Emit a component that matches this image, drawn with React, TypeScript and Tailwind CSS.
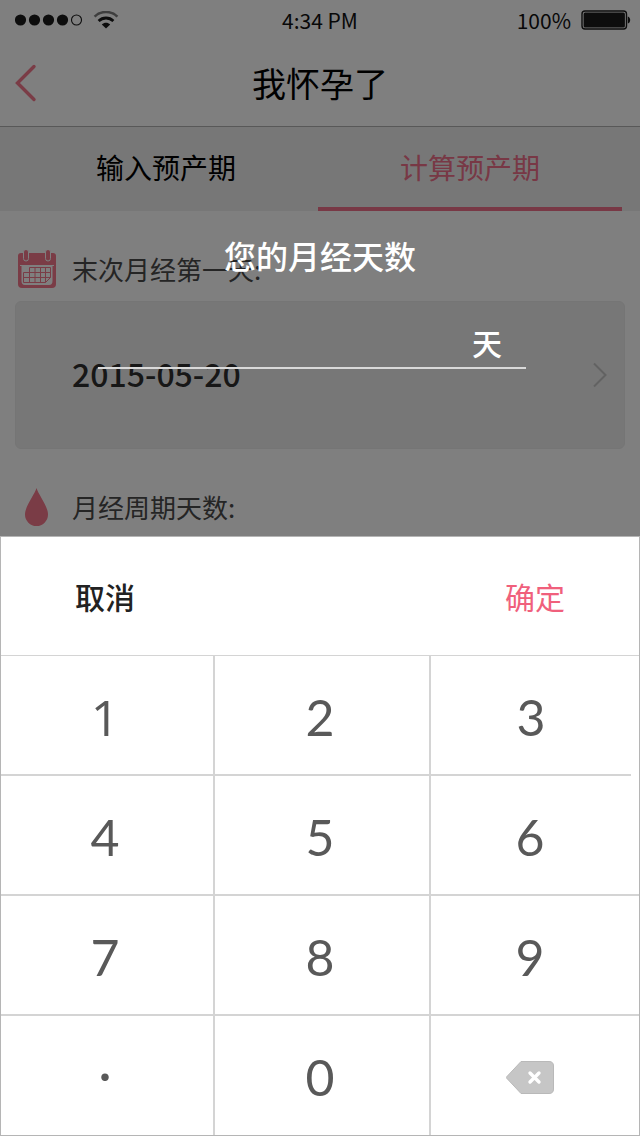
import { useState, type ReactNode } from 'react';

const DIGITS = ['1', '2', '3', '4', '5', '6', '7', '8', '9', '·', '0'];

function StatusBar() {
  return (
    <div className="grid h-10 grid-cols-3 items-center px-[15px] text-[21px] leading-10 text-[#111]">
      <div className="flex items-center gap-[10px]">
        <svg width="68" height="12" viewBox="0 0 68 12" aria-hidden="true">
          {[6, 20, 34, 48].map((x) => (
            <circle key={x} cx={x - 0.5} cy="6" r="5.6" fill="#1a1a1a" />
          ))}
          <circle cx="61.5" cy="6" r="5" fill="none" stroke="#1a1a1a" strokeWidth="1.1" />
        </svg>
        <svg width="26" height="18" viewBox="0 0 26 18" fill="none" aria-hidden="true">
          <path d="M1.6 5.6C8-.5 18-.5 24.4 5.6" stroke="#7c7c7c" strokeWidth="2.6" />
          <path d="M5.6 10C9.8 6 16.2 6 20.4 10" stroke="#1a1a1a" strokeWidth="2.8" />
          <path d="M8.8 13.4C11.2 11.3 14.8 11.3 17.2 13.4L13 17.6Z" fill="#1a1a1a" />
        </svg>
      </div>
      <span className="text-center">4:34 PM</span>
      <div className="-mr-[6px] flex items-center justify-end gap-[10px]">
        <span>100%</span>
        <svg width="50" height="20" viewBox="0 0 50 20" aria-hidden="true">
          <rect x="1" y="1" width="44.5" height="18" rx="3" fill="#fff" stroke="#1a1a1a" strokeWidth="1.4" />
          <rect x="2.6" y="2.6" width="41.3" height="14.8" rx="1.5" fill="#1a1a1a" />
          <path d="M46.8 6.5C50 7.5 50 12.5 46.8 13.5Z" fill="#1a1a1a" />
        </svg>
      </div>
    </div>
  );
}

function CalendarIcon() {
  return (
    <svg width="38" height="38" viewBox="0 0 38 38" aria-hidden="true">
      <path d="M3 3H35Q38 3 38 6V34Q38 38 34 38H4Q0 38 0 34V6Q0 3 3 3Z" fill="#f4788c" />
      <path d="M2 15H36V16H34.5V31Q34.5 35 31 35H7Q3.5 35 3.5 31V16H2Z" fill="#fff" />
      <rect x="5.5" y="-.5" width="5" height="11.5" rx="2.5" fill="#f4788c" stroke="#fff" />
      <rect x="27.5" y="-.5" width="5" height="11.5" rx="2.5" fill="#f4788c" stroke="#fff" />
      <path
        d="M11.5 17.5H32.5V27.5M5.5 22.5H32.5M5.5 27.5H32.5M5.5 32.5H27.5M5.5 22.5V32.5M11.5 17.5V32.5M17 17.5V32.5M22.5 17.5V32.5M27.5 17.5V32.5M27.5 32.5L32.5 27.5"
        fill="none"
        stroke="#f4788c"
      />
    </svg>
  );
}

function DropIcon() {
  return (
    <svg width="24" height="38" viewBox="0 0 24 38" aria-hidden="true">
      <path d="M11.5 0C13 6 23 18 23 26.5A11.5 11.5 0 0 1 0 26.5C0 18 10 6 11.5 0Z" fill="#f4788c" />
    </svg>
  );
}

function FieldLabel({ icon, children }: { icon: ReactNode; children: ReactNode }) {
  return (
    <div className="flex h-[90px] items-center gap-[14px] px-4 pt-[26px]">
      <span className="flex w-[42px] justify-center">{icon}</span>
      <h2 className="text-[26px] leading-10 text-[#4a4a4a]">{children}</h2>
    </div>
  );
}

function Page() {
  return (
    <div className="col-start-1 row-start-1 bg-white">
      <StatusBar />
      <header className="grid h-[87px] grid-cols-[1fr_auto_1fr] items-center border-b border-[#b0b0b0] px-[15px]">
        <button type="button" aria-label="返回" className="justify-self-start">
          <svg width="22" height="38" viewBox="0 0 22 38" fill="none" aria-hidden="true">
            <path d="M19 2.5L2.5 19L19 35.5" stroke="#f4788c" strokeWidth="3.4" strokeLinecap="round" />
          </svg>
        </button>
        <h1 className="text-[34px] leading-[50px] text-black">我怀孕了</h1>
      </header>
      <nav className="grid h-[84px] grid-cols-2 bg-[#efefef] pr-[18px] pl-[14px] text-[28px]">
        <button type="button" className="border-b-4 border-transparent text-black">
          输入预产期
        </button>
        <button type="button" className="border-b-4 border-[#f0708a] text-[#f0708a]">
          计算预产期
        </button>
      </nav>
      <FieldLabel icon={<CalendarIcon />}>末次月经第一天:</FieldLabel>
      <button
        type="button"
        className="mx-[15px] flex h-[148px] w-[calc(100%-30px)] items-center justify-between rounded-md border border-[#eaeaea] bg-[#efefef] pr-4 pl-14"
      >
        <span className="pb-1 text-[32px] font-medium text-[#2e2e2e]">2015-05-20</span>
        <svg width="16" height="26" viewBox="0 0 16 26" fill="none" aria-hidden="true">
          <path d="M2 1.5L13.5 13L2 24.5" stroke="#c4c4c4" strokeWidth="2" />
        </svg>
      </button>
      <FieldLabel icon={<DropIcon />}>月经周期天数:</FieldLabel>
    </div>
  );
}

function Keypad({ onKey, onDelete, onClear }: { onKey: (key: string) => void; onDelete: () => void; onClear: () => void }) {
  return (
    <div className="border border-[#b5b5b5] bg-white">
      <div className="flex h-[119px] items-center justify-between border-b border-[#d4d4d4] px-[74px] text-[30px]">
        <button type="button" className="font-medium text-[#222]" onClick={onClear}>
          取消
        </button>
        <button type="button" className="text-[#f0607c]">
          确定
        </button>
      </div>
      <div className="grid grid-cols-[214fr_216fr_208fr] grid-rows-[120px_120px_120px_119px] font-['Lato',sans-serif] text-[50px] text-[#595959] [&>button]:border-[#d4d4d4] [&>button]:pt-1 [&>button:nth-child(-n+9)]:border-b-2 [&>button:nth-child(3n+1)]:border-r-2 [&>button:nth-child(3n+1)]:pr-1 [&>button:nth-child(3n+2)]:border-r-2 [&>button:nth-child(3n+2)]:pr-1 [&>button:nth-child(3n+6)]:pr-[10px] [&>button:nth-child(3)]:mr-2 [&>button:nth-child(10)]:pb-2 [&>button:first-child]:font-['Open_Sans',sans-serif]">
        {DIGITS.map((digit) => (
          <button key={digit} type="button" onClick={() => onKey(digit)}>
            {digit}
          </button>
        ))}
        <button type="button" aria-label="删除" className="flex items-center justify-center" onClick={onDelete}>
          <svg width="48" height="34" viewBox="0 0 48 34" aria-hidden="true">
            <path
              d="M15 .5H43Q47.5 .5 47.5 5V28Q47.5 32.5 43 32.5H15L.5 17Q0 16.5 .5 16Z"
              fill="#c6c6c6"
              stroke="#b9b9b9"
            />
            <path d="M24 12L33 21M33 12L24 21" stroke="#fff" strokeWidth="3.4" strokeLinecap="round" />
          </svg>
        </button>
      </div>
    </div>
  );
}

export default function App() {
  const [days, setDays] = useState('');

  return (
    <div className="grid min-h-screen font-['Noto_Sans_CJK_SC',sans-serif]">
      <Page />
      <div role="dialog" aria-labelledby="prompt" className="z-10 col-start-1 row-start-1 flex flex-col bg-black/50">
        <div className="flex-1 pt-[235px] pr-[114px] pl-[98px] text-white">
          <label id="prompt" htmlFor="days" className="-mr-4 block text-center text-[32px] leading-10 font-medium">
            您的月经天数
          </label>
          <div className="mt-[42px] flex h-[52px] items-center border-b-2 border-[#d9d9d9] pr-6 text-[30px] font-medium">
            <input
              id="days"
              inputMode="none"
              value={days}
              onChange={(event) => setDays(event.target.value)}
              className="min-w-0 flex-1 bg-transparent text-right outline-none"
            />
            <span>天</span>
          </div>
        </div>
        <Keypad
          onKey={(key) => setDays((value) => value + (key === '·' ? '.' : key))}
          onDelete={() => setDays((value) => value.slice(0, -1))}
          onClear={() => setDays('')}
        />
      </div>
    </div>
  );
}
